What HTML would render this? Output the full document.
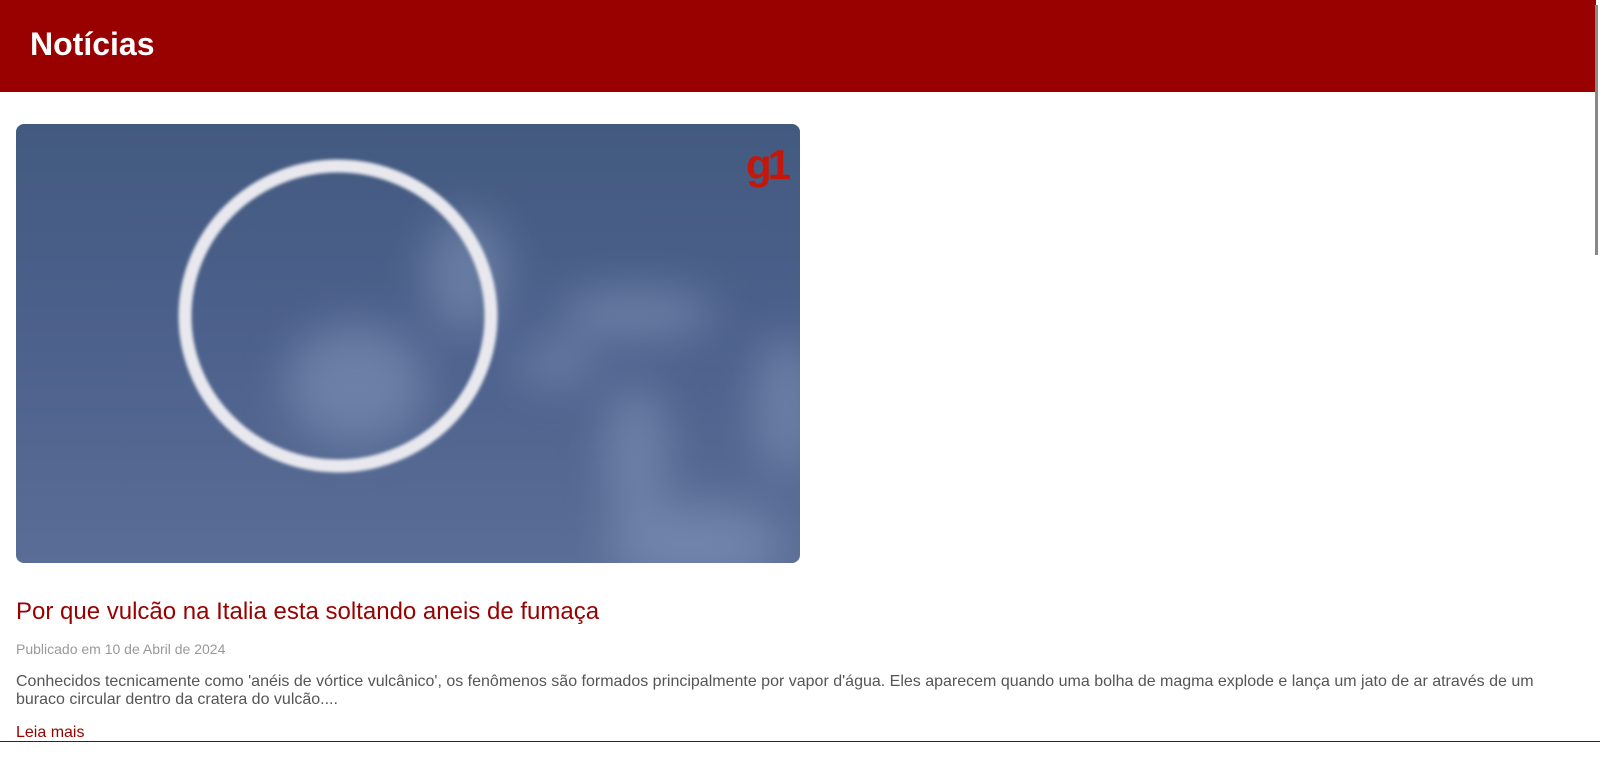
<!DOCTYPE html>
<html><head><meta charset="utf-8"><style>
body{margin:0;width:1600px;height:759px;overflow:hidden;background:#fff;font-family:"Liberation Sans",Arial,sans-serif;position:relative}
.hdr{position:absolute;left:0;top:0;width:1596px;height:92px;background:#990000}
.hdr h1{margin:0;position:absolute;left:30px;top:26px;color:#fff;font-size:32px;font-weight:bold}
.sb{position:absolute;left:1595px;top:5px;width:3px;height:250px;background:#888}
.img{position:absolute;left:16px;top:124px;width:784px;height:439px;border-radius:8px;overflow:hidden;background:linear-gradient(180deg,#435a80 0%,#4c618c 50%,#5a6d96 100%)}
.t{position:absolute;left:16px;top:598px;font-size:24px;color:#990000;margin:0}
.d{position:absolute;left:16px;top:641px;font-size:14px;color:#999}
.p{position:absolute;left:16px;top:673px;width:1540px;font-size:16px;line-height:18px;color:#555}
.l{position:absolute;left:16px;top:724px;font-size:16px;color:#990000}
.bl{position:absolute;left:0;top:741px;width:1600px;height:1px;background:#800}
</style></head><body>
<div class="hdr"><h1>Notícias</h1></div>
<div class="sb"></div>
<div class="img"><svg width="784" height="439">
<defs><filter id="b"><feGaussianBlur stdDeviation="22"/></filter><filter id="s"><feGaussianBlur stdDeviation="1.5"/></filter></defs>
<g filter="url(#b)" fill="#8a9cc0" opacity=".5">
<ellipse cx="340" cy="260" rx="70" ry="60"/><ellipse cx="450" cy="150" rx="40" ry="60"/><ellipse cx="620" cy="190" rx="80" ry="25"/><ellipse cx="680" cy="420" rx="90" ry="40"/><ellipse cx="620" cy="330" rx="30" ry="70"/><ellipse cx="770" cy="280" rx="30" ry="70"/><ellipse cx="540" cy="240" rx="40" ry="20"/>
</g>
<ellipse cx="322" cy="192" rx="153" ry="150" fill="none" stroke="#e8e8ee" stroke-width="13" filter="url(#s)"/>
<text x="730" y="55" font-family="Liberation Sans,sans-serif" font-weight="bold" font-size="42" fill="#c4170c" letter-spacing="-4">g1</text>
</svg></div>
<h2 class="t" style="font-weight:normal">Por que vulcão na Italia esta soltando aneis de fumaça</h2>
<div class="d">Publicado em 10 de Abril de 2024</div>
<div class="p">Conhecidos tecnicamente como 'anéis de vórtice vulcânico', os fenômenos são formados principalmente por vapor d'água. Eles aparecem quando uma bolha de magma explode e lança um jato de ar através de um buraco circular dentro da cratera do vulcão....</div>
<div class="l">Leia mais</div>
<div class="bl"></div>
</body></html>
